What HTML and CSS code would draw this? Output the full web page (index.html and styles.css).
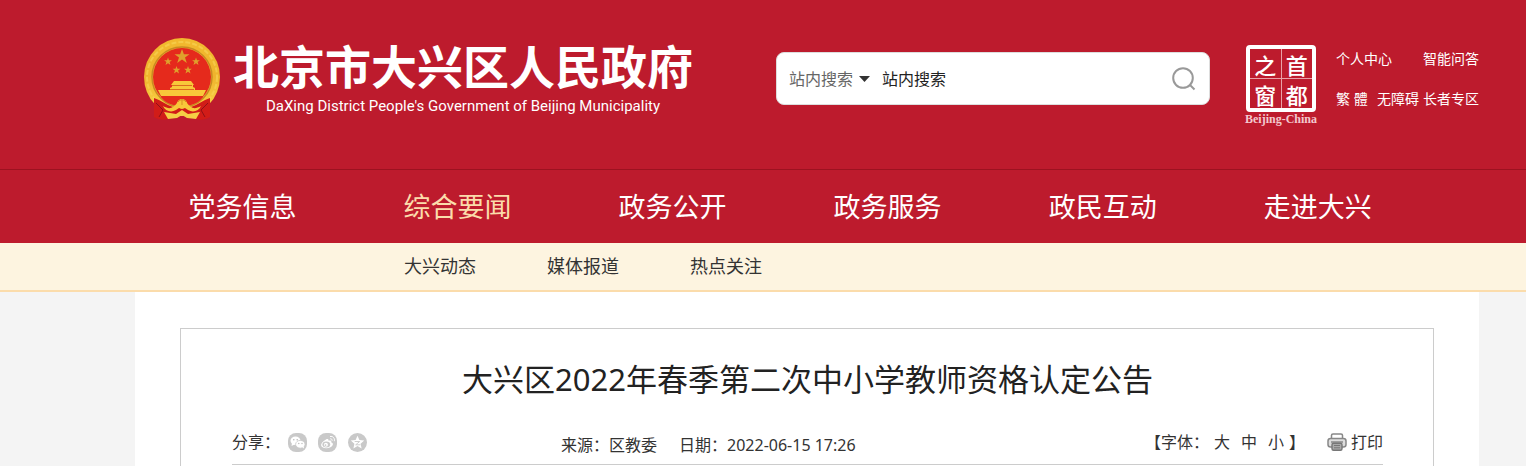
FILE: index.html
```html
<!DOCTYPE html>
<html lang="zh-CN">
<head>
<meta charset="utf-8">
<title>大兴区2022年春季第二次中小学教师资格认定公告</title>
<link rel="stylesheet" href="styles.css">
</head>
<body>
<header class="header">
  <div class="wrap masthead">
    <a class="brand" href="#">
      <svg class="emblem" viewBox="0 0 78 84" aria-hidden="true">
        <defs>
          <linearGradient id="gold" x1="0" y1="0" x2="0" y2="1">
            <stop offset="0" stop-color="#f2b92e"/><stop offset=".5" stop-color="#efb32d"/><stop offset="1" stop-color="#fbd94b"/>
          </linearGradient>
        </defs>
        <ellipse cx="39" cy="40" rx="38" ry="39" fill="url(#gold)"/>
        <circle cx="39" cy="40" r="35" fill="none" stroke="#f9d558" stroke-width="2" stroke-dasharray="5 2" opacity=".6"/>
        <circle cx="39" cy="40" r="30" fill="none" stroke="#c98a22" stroke-width="1.500"/>
        <circle cx="39" cy="40" r="29" fill="#e52a1c"/>
        <g fill="#dfa02c">
          <path d="M39 12l1.900 5.200h5.600l-4.500 3.300 1.800 5.500-4.800-3.400-4.800 3.400 1.800-5.500-4.500-3.300h5.600z"/>
          <path d="M25 20.500l1 2.800h2.900l-2.300 1.800.9 2.900-2.500-1.700-2.500 1.700.9-2.900-2.300-1.800H24zM53 20.500l1 2.800h2.900l-2.300 1.800.9 2.900-2.500-1.700-2.500 1.700.9-2.900-2.300-1.800H52zM33.500 29l1 2.800h2.900l-2.300 1.800.9 2.900-2.500-1.700-2.500 1.700.9-2.900-2.300-1.800h2.900zM45 29l1 2.800h2.900l-2.300 1.800.9 2.900-2.500-1.700-2.500 1.700.9-2.900-2.300-1.800H44z"/>
        </g>
        <path d="M31 44h17l3 4H28zM29 48h21v2l2 1v3H27v-3l2-1zM15 53h48l-3 6H18z" fill="#f8c83a"/>
        <path d="M29 48.500h20M27 52.500h24" stroke="#dc6c1e"/>
        <path d="M18 60h42c-4 6-12 9-21 9s-17-3-21-9z" fill="#e52a1c"/>
        <path d="M11 61c7 2 12 7 19 9l9-3 9 3c7-2 12-7 19-9v19c-7 4-13 3-18 0l-6-2h-8l-6 2c-5 3-11 4-18 0z" fill="#d11c18"/>
        <path d="M13 66l7 7-4 7M65 66l-7 7 4 7" fill="none" stroke="#8f1017"/>
        <path d="M20 69c7 4 10 2 14-3 2-4 8-4 10 0 4 5 7 7 14 3-2 5-8 7-13 4l-6-4-6 4c-5 3-11 1-13-4z" fill="#f8c83a"/>
        <circle cx="39" cy="67" r="5" fill="#f8c83a"/>
        <path d="M35 65c2-3 6-3 8 0M39 62v6" fill="none" stroke="#d98f22"/>
        <path d="M21 75l12 2 6-4 6 4 12-2-4 7-9-1-5-3-5 3-9 1z" fill="#f5cf45"/>
      </svg>
      <span class="brand-text">
        <span class="brand-cn">北京市大兴区人民政府</span>
        <span class="brand-en">DaXing District People's Government of Beijing Municipality</span>
      </span>
    </a>

    <form class="search" role="search">
      <select class="search-scope" aria-label="搜索范围"><option>站内搜索</option></select>
      <svg class="caret" viewBox="0 0 11 6" aria-hidden="true"><path d="M0 0h11L5.500 6z"/></svg>
      <input class="search-input" type="text" aria-label="搜索内容" value="站内搜索">
      <button class="search-button" type="button" aria-label="搜索">
        <svg viewBox="0 0 24 24" aria-hidden="true"><circle cx="11" cy="11" r="9.800"/><path d="M17.500 17.500l5 5"/></svg>
      </button>
    </form>

    <a class="seal" href="#">
      <span class="seal-grid"><span>之</span><span>首</span><span>窗</span><span>都</span></span>
      <span class="seal-name">Beijing-China</span>
    </a>

    <div class="tools">
      <div class="tools-row"><a href="#">个人中心</a><a href="#">智能问答</a></div>
      <div class="tools-row"><a href="#">繁 體</a><span class="tools-pair"><a href="#">无障碍</a><a href="#">长者专区</a></span></div>
    </div>
  </div>

  <nav class="nav" aria-label="主导航">
    <div class="wrap nav-list">
      <a href="#">党务信息</a>
      <a class="active" href="#">综合要闻</a>
      <a href="#">政务公开</a>
      <a href="#">政务服务</a>
      <a href="#">政民互动</a>
      <a href="#">走进大兴</a>
    </div>
  </nav>
</header>

<nav class="subnav" aria-label="综合要闻">
  <div class="wrap subnav-list">
    <a href="#">大兴动态</a>
    <a href="#">媒体报道</a>
    <a href="#">热点关注</a>
  </div>
</nav>

<main class="wrap page">
  <article class="article">
    <h1>大兴区2022年春季第二次中小学教师资格认定公告</h1>
    <div class="meta">
      <div class="share">
        <span class="share-label">分享：</span>
        <a href="#" aria-label="微信">
          <svg viewBox="0 0 19 19"><rect width="19" height="19" rx="8" fill="#c9c9c9"/><ellipse cx="7.500" cy="7.700" rx="5" ry="4.200" fill="#fff"/><path d="M4 10l-.5 3 3-1.500z" fill="#fff"/><ellipse cx="12.300" cy="11.300" rx="4.700" ry="3.900" fill="#fff" stroke="#c9c9c9" stroke-width=".8"/><path d="M14 14l2 1.500-.5-3z" fill="#fff"/><g fill="#bbb"><circle cx="5.800" cy="6.700" r=".8"/><circle cx="9.200" cy="6.700" r=".8"/><circle cx="10.800" cy="10.500" r=".7"/><circle cx="14" cy="10.500" r=".7"/></g></svg>
        </a>
        <a href="#" aria-label="微博">
          <svg viewBox="0 0 19 19"><rect width="19" height="19" rx="8" fill="#c9c9c9"/><path d="M8 6.500c1.500-.8 2.800-.3 2.500 1.200 2-.7 3.300 0 2.700 1.500 4 1.600.6 6-4.900 6-6.300 0-7.300-4.900-.3-8.700z" fill="#fff"/><ellipse cx="8.300" cy="11.500" rx="3.900" ry="2.900" fill="#c9c9c9"/><circle cx="7.900" cy="11.800" r="2" fill="#fff"/><circle cx="7.500" cy="12.100" r=".9" fill="#c9c9c9"/><path d="M12 3.500c3-.6 5 1.700 4.300 4.700M12.200 5.800c1.300-.3 2.200.7 1.900 2" fill="none" stroke="#fff"/></svg>
        </a>
        <a href="#" aria-label="QQ空间">
          <svg viewBox="0 0 19 19"><circle cx="9.500" cy="9.500" r="9.500" fill="#c9c9c9"/><path d="M9.500 2.800l1.900 4.300 4.800.5-3.600 3.100 1 4.700-4.100-2.400-4.100 2.400 1-4.700-3.600-3.100 4.800-.5z" fill="#fff"/><path d="M6.700 8.500h5l-4 3.300h4.700" fill="none" stroke="#c9c9c9" stroke-width=".9"/></svg>
        </a>
      </div>
      <div class="source"><span>来源：区教委</span><span>日期：<time datetime="2022-06-15T17:26">2022-06-15 17:26</time></span></div>
      <div class="actions">
        <div class="sizes"><span>【字体：</span><button type="button">大</button><button type="button">中</button><button type="button">小</button><span>】</span></div>
        <button class="print" type="button">
          <svg viewBox="0 0 20 18" aria-hidden="true"><path d="M4.500 5V2.200C4.500 1.200 5 1 6 1h8c1 0 1.500.2 1.500 1.200V5" fill="#fff" stroke="#888" stroke-width="1.500"/><rect x="1" y="5.500" width="18" height="8.500" rx="2.500" fill="#ddd" stroke="#888" stroke-width="1.500"/><path d="M4 9h12" stroke="#888" stroke-width="1.500"/><rect x="5" y="10.200" width="10" height="7" rx="1.500" fill="#aaa" stroke="#777" stroke-width="1.400"/><path d="M7 12.500h6M7 14.800h6" stroke="#777"/></svg>
          打印
        </button>
      </div>
    </div>
  </article>
</main>
</body>
</html>
```
FILE: styles.css
```css
* { box-sizing: border-box; }

body {
  margin: 0;
  background: #f4f4f4;
  color: #333;
  font: 16px/24px "Noto Sans", "Noto Sans CJK SC", sans-serif;
}

a { color: inherit; text-decoration: none; }
button, input, select { font: inherit; color: inherit; border: 0; background: none; padding: 0; margin: 0; }
button { cursor: pointer; }
svg { display: block; }

.wrap { margin: 0 47px 0 135px; }

.header { background: #bd1b2d; color: #fff; }

.masthead {
  display: flex;
  align-items: center;
  padding: 31px 0 43px;
}

.brand { display: flex; align-items: center; gap: 12px; padding-left: 8px; }
.emblem { width: 78px; height: 84px; }
.brand-text { display: flex; flex-direction: column; align-items: center; gap: 5px; padding-bottom: 5px; white-space: nowrap; }
.brand-cn { font-family: "Noto Sans CJK SC", sans-serif; font-weight: 700; font-size: 46px; line-height: 54px; }
.brand-en { font-family: Roboto, sans-serif; font-size: 15px; line-height: 20px; }

.search {
  display: flex;
  align-items: center;
  width: 434px;
  height: 53px;
  margin-left: auto;
  padding: 0 13px 0 12px;
  background: #fff;
  border: 1px solid #ddd;
  border-radius: 8px;
  color: #222;
}
.search-scope { appearance: none; width: 64px; color: #666; }
.caret { width: 11px; height: 6px; margin: 0 12px 0 6px; fill: #333; }
.search-input { flex: 1; min-width: 0; outline: 0; }
.search-button svg { width: 24px; height: 24px; fill: none; stroke: #999; stroke-width: 2; }

.seal { display: flex; flex-direction: column; align-items: center; width: 76px; margin: 14px 17px 0 33px; }
.seal-grid {
  display: grid;
  grid-template-columns: 1fr 1fr;
  gap: 1px;
  width: 70px;
  height: 67px;
  border: 4px solid #fff;
  border-radius: 4px;
  background: #e9a0a8;
}
.seal-grid span {
  display: flex;
  align-items: center;
  justify-content: center;
  background: #bd1b2d;
  font-family: "Noto Sans CJK SC", sans-serif;
  font-weight: 500;
  font-size: 22px;
  line-height: 22px;
}
.seal-name { font: 700 12px/14px "Liberation Serif", serif; color: #f3c9cd; }

.tools { width: 143px; padding-top: 1px; font-size: 14px; line-height: 20px; white-space: nowrap; }
.tools-row { display: flex; justify-content: space-between; }
.tools-row + .tools-row { margin-top: 20px; }
.tools-pair { display: flex; gap: 4px; }

.nav { border-top: 1px solid #9c1220; }
.nav-list { display: flex; }
.nav-list a { width: 16%; text-align: center; font-size: 27px; line-height: 73px; }
.nav-list .active { color: #fbdcab; }

.subnav { background: #fdf4e0; border-bottom: 2px solid #fbdcab; }
.subnav-list { display: flex; gap: 71px; padding-left: 269px; font-size: 18px; line-height: 47px; }

.page { background: #fff; padding: 36px 45px 0; }
.article { border: 1px solid #ccc; border-bottom: 0; padding: 28px 50px 1px 51px; }
.article h1 { margin: 0; text-align: center; color: #222; font-weight: 400; font-size: 31px; line-height: 44px; }

.meta { display: flex; align-items: flex-start; margin-top: 29px; padding-bottom: 7px; border-bottom: 1px solid #ccc; white-space: nowrap; }
.share { display: flex; align-items: center; gap: 11px; }
.share-label { width: 45px; }
.share svg { width: 19px; height: 19px; }
.source { display: flex; gap: 22px; margin-left: 194px; padding-top: 3px; }
.actions { display: flex; gap: 22px; margin-left: auto; }
.sizes { display: flex; gap: 11px; }
.sizes span:first-child { margin-right: -6px; }
.sizes span:last-child { margin-left: -6px; }
.print { display: flex; align-items: center; gap: 4px; }
.print svg { width: 20px; height: 18px; }
```
